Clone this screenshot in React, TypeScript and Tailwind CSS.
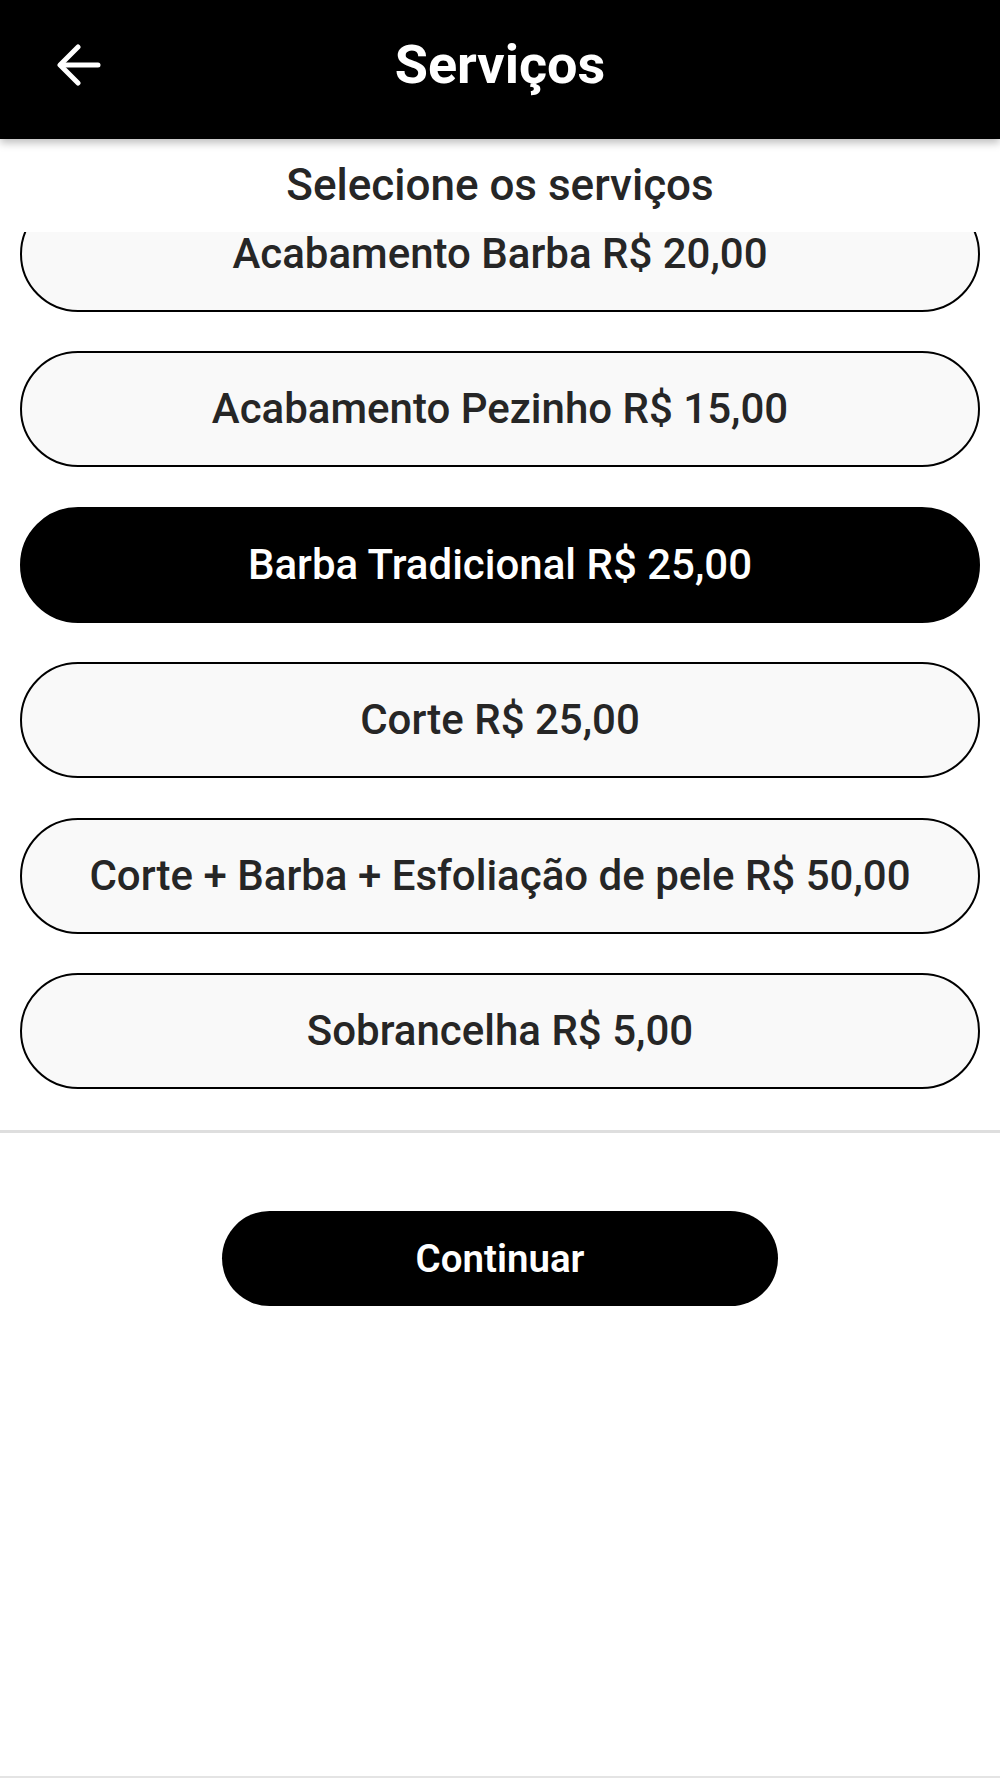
import React, { useState } from 'react';

const services = [
    { id: 1, name: 'Acabamento Barba', price: 'R$ 20,00' },
    { id: 2, name: 'Acabamento Pezinho', price: 'R$ 15,00' },
    { id: 3, name: 'Barba Tradicional', price: 'R$ 25,00' },
    { id: 4, name: 'Corte', price: 'R$ 25,00' },
    { id: 5, name: 'Corte + Barba + Esfoliação de pele', price: 'R$ 50,00' },
    { id: 6, name: 'Sobrancelha', price: 'R$ 5,00' },
];

function BackArrow() {
    return (
        <svg width="46" height="42" viewBox="0 0 46 42" fill="none" stroke="white" strokeWidth="5" strokeLinecap="round" strokeLinejoin="round">
            <path d="M42 21H5" />
            <path d="M22 3L4 21l18 18" />
        </svg>
    );
}

export default function App() {
    const [selected, setSelected] = useState<number[]>([3]);

    const toggle = (id: number) => {
        setSelected((prev) => (prev.includes(id) ? prev.filter((s) => s !== id) : [...prev, id]));
    };

    return (
        <div className="flex flex-col w-full h-[1778px] bg-white font-['Roboto',sans-serif] border-b-2 border-[#e4e4e4]">
            <header className="relative z-10 flex items-center justify-center h-[139px] bg-black shadow-[0_4px_8px_rgba(0,0,0,0.25)]">
                <button className="absolute left-[56px] top-[44px]">
                    <BackArrow />
                </button>
                <h1 className="text-white text-[54px] font-bold leading-none mt-[-10px]">Serviços</h1>
            </header>

            <div className="flex items-center justify-center h-[93px]">
                <h2 className="text-[#262626] text-[44px] font-medium leading-none mt-[-2px]">Selecione os serviços</h2>
            </div>

            {/* lista rolada: o primeiro item fica cortado no topo */}
            <div className="h-[898px] overflow-hidden">
                <div className="flex flex-col gap-[39.4px] px-[20px] mt-[-36px]">
                    {services.map((s) => {
                        const active = selected.includes(s.id);
                        return (
                            <button
                                key={s.id}
                                onClick={() => toggle(s.id)}
                                className={`h-[116px] w-full rounded-full border-2 border-black text-[42px] leading-none font-medium ${active ? 'bg-black text-white' : 'bg-[#f9f9f9] text-[#262626]'}`}
                            >
                                {s.name} {s.price}
                            </button>
                        );
                    })}
                </div>
            </div>

            <div className="border-t-[3px] border-[#dedede]" />

            <div className="flex justify-center pt-[78px]">
                <button className="w-[556px] h-[95px] rounded-full bg-black text-white text-[38.5px] font-semibold">Continuar</button>
            </div>
        </div>
    );
}
